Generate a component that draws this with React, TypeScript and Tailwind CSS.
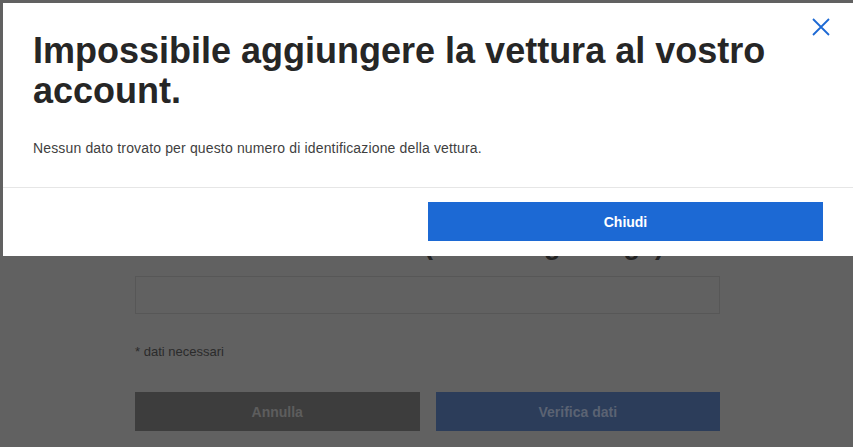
import React from "react"

const CloseIcon: React.FC = () => (
  <svg width="18" height="18" viewBox="0 0 18 18" fill="none">
    <path d="M1 1L17 17M17 1L1 17" stroke="#1c69d4" strokeWidth="1.8" />
  </svg>
)

const App: React.FC = () => {
  return (
    <div className="relative h-[447px] w-[853px] overflow-hidden bg-[#616161] font-['Liberation_Sans',Arial,sans-serif]">
      {/* page behind the dialog */}
      <div className="ml-[135px] flex w-[585px] flex-col">
        <h1 className="-mt-[42px] pl-[6px] text-[37px] font-bold leading-[44px] text-[#232323]">Aggiungi vettura</h1>
        <h2 className="mt-[227px] pl-[70px] text-[27px] font-bold leading-[32px] text-[#232323]">
          Numero di telaio (VIN o targa lunga)
        </h2>
        <div className="mt-[15px] h-[38px] border border-[#575757]" />
        <p className="mt-[29px] text-[13px] leading-[18px] text-[#2b2b2b]">* dati necessari</p>
        <div className="mt-[31px] grid grid-cols-2 gap-4">
          <button className="h-[39px] bg-[#3d3d3d] text-sm font-bold text-[#5d5d5d]">Annulla</button>
          <button className="h-[39px] bg-[#2c3d5a] text-sm font-bold text-[#5b6373]">Verifica dati</button>
        </div>
      </div>

      {/* dialog */}
      <div className="absolute left-[3px] right-0 top-[3px] bg-white">
        <button className="absolute right-[23px] top-[15px]">
          <CloseIcon />
        </button>
        <div className="px-[30px] pt-[28px]">
          <h1 className="text-[36px] font-bold leading-[40px] text-[#262626]">
            Impossibile aggiungere la vettura al vostro account.
          </h1>
          <p className="mt-[27px] text-sm leading-5 tracking-[0.15px] text-[#3f3f3f]">
            Nessun dato trovato per questo numero di identificazione della vettura.
          </p>
        </div>
        <div className="mt-[29px] h-px bg-[#e6e6e6]" />
        <div className="grid grid-cols-2 px-[30px] pb-[15px] pt-[14px]">
          <div />
          <button className="h-[39px] bg-[#1c69d4] text-sm font-bold text-white">Chiudi</button>
        </div>
      </div>
    </div>
  )
}

export default App
